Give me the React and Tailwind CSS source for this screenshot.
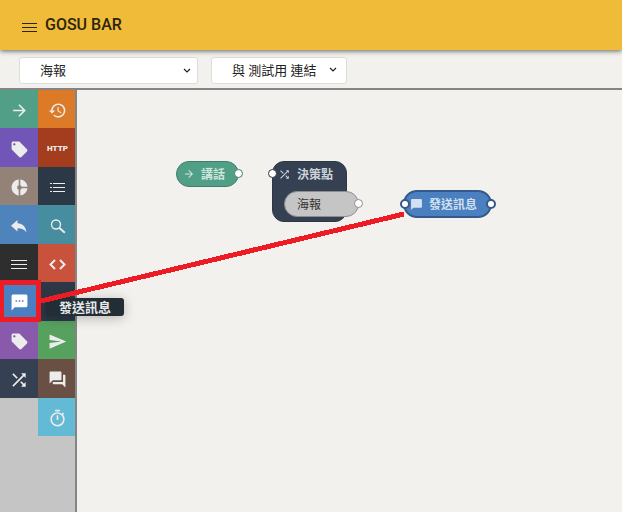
import {
  MdArrowForward, MdHistory, MdLocalOffer, MdDonutSmall,
  MdSms, MdSend, MdShuffle, MdForum, MdOutlineTimer, MdChatBubble,
} from "react-icons/md";

function ListIcon({ className }) {
  return (
    <svg viewBox="0 0 15 9" className={className} fill="currentColor" aria-hidden="true">
      <path d="M0 0h2v1H0zM0 4h2v1H0zM0 8h2v1H0zM3 0h12v1H3zM3 4h12v1H3zM3 8h12v1H3z" />
    </svg>
  );
}

function LinesIcon({ className }) {
  return (
    <svg viewBox="0 0 16 9" className={className} fill="currentColor" aria-hidden="true">
      <path d="M0 0h16v1H0zM0 4h16v1H0zM0 8h16v1H0z" />
    </svg>
  );
}

function ReplyIcon({ className }) {
  return (
    <svg viewBox="0 0 16 13" className={className} fill="currentColor" aria-hidden="true">
      <path d="M6.500 0v3.200C11.500 3.600 14.800 6.500 15.500 12.500C13.500 9.500 10.800 8.300 6.500 8.300v3.200L0 5.700z" />
    </svg>
  );
}

function SearchIcon({ className }) {
  return (
    <svg viewBox="0 0 16 15" className={className} fill="none" stroke="currentColor" aria-hidden="true">
      <circle cx="6" cy="5.500" r="4.500" strokeWidth="1.400" />
      <path d="M9.200 8.800L14.800 13.800" strokeWidth="1.900" />
    </svg>
  );
}

function CodeIcon({ className }) {
  return (
    <svg viewBox="0 0 17 11" className={className} fill="none" stroke="currentColor" strokeWidth="2" aria-hidden="true">
      <path d="M6 1L1.500 5.500L6 10M11 1l4.500 4.500L11 10" />
    </svg>
  );
}

function HttpLabel({ className }) {
  return <span className={className}>HTTP</span>;
}

function MenuGlyph({ className }) {
  return (
    <svg viewBox="0 0 15 9" className={className} fill="currentColor" aria-hidden="true">
      <path d="M0 0h15v1H0zM0 4h15v1H0zM0 8h15v1H0z" />
    </svg>
  );
}

function Chevron({ className }) {
  return (
    <svg viewBox="0 0 8 6" className={className} fill="none" stroke="currentColor" strokeWidth="1.2" aria-hidden="true">
      <path d="M1 1l3 3 3-3" />
    </svg>
  );
}

const tools = [
  { label: "講話", bg: "bg-[#529f87]", Icon: MdArrowForward, size: "size-[19px]" },
  { label: "歷史", bg: "bg-[#dc7a27]", Icon: MdHistory, size: "size-[19px]" },
  { label: "標籤", bg: "bg-[#7155b7]", Icon: MdLocalOffer, size: "size-[19px]" },
  { label: "HTTP", bg: "bg-[#a33d1d]", Icon: HttpLabel, size: "text-[8px] leading-4 font-black" },
  { label: "分流", bg: "bg-[#938278]", Icon: MdDonutSmall, size: "size-[19px]" },
  { label: "清單", bg: "bg-[#2d3846]", Icon: ListIcon, size: "h-[9px] w-[15px]" },
  { label: "回覆", bg: "bg-[#4f83bb]", Icon: ReplyIcon, size: "h-[13px] w-4" },
  { label: "搜尋", bg: "bg-[#458d9f]", Icon: SearchIcon, size: "h-[15px] w-4" },
  { label: "選單", bg: "bg-[#2e2e2e]", Icon: LinesIcon, size: "h-[9px] w-4" },
  { label: "程式碼", bg: "bg-[#c9523c]", Icon: CodeIcon, size: "h-[11px] w-[17px]" },
  { label: "發送訊息", bg: "bg-[#4a80c0]", Icon: MdSms, size: "size-[19px]", active: true },
  { label: "設定", bg: "bg-[#2d3846]", Icon: ListIcon, size: "h-[9px] w-[15px]" },
  { label: "加標籤", bg: "bg-[#8959ab]", Icon: MdLocalOffer, size: "size-[19px]" },
  { label: "傳送", bg: "bg-[#57a15f]", Icon: MdSend, size: "size-[19px]" },
  { label: "決策點", bg: "bg-[#354152]", Icon: MdShuffle, size: "size-[20px]" },
  { label: "對話", bg: "bg-[#6a5044]", Icon: MdForum, size: "size-[19px]" },
  { label: "計時", bg: "bg-[#62bad4]", Icon: MdOutlineTimer, size: "size-[19px]", second: true },
];

function Picker({ label, value, width, chevron }) {
  return (
    <div className={`relative ${width}`}>
      <select
        aria-label={label}
        className="block h-[27px] w-full appearance-none rounded-[3px] border border-[#deddda] bg-white pl-5 pr-6 pt-[2px] text-[13px] leading-5 text-[#222]"
      >
        <option>{value}</option>
      </select>
      <Chevron className={`pointer-events-none absolute h-[6px] w-2 text-[#222] ${chevron}`} />
    </div>
  );
}

function Port({ className }) {
  return <span className={`absolute rounded-full bg-white ${className}`} />;
}

export default function App() {
  return (
    <div className="relative flex min-h-screen flex-col overflow-hidden bg-[#f2f1ed] font-[Roboto,'Noto_Sans_CJK_TC',sans-serif]">
      <header className="relative z-10 flex h-[50px] items-center gap-2 bg-[#f0bb38] pl-[22px] text-[#2b2410] shadow-[0_1px_5px_rgba(0,0,0,0.6)]">
        <button aria-label="選單" className="pt-1">
          <MenuGlyph className="h-[9px] w-[15px]" />
        </button>
        <h1 className="text-[16px] font-medium leading-6">GOSU BAR</h1>
      </header>

      <div className="flex h-10 items-center gap-[13px] border-b-2 border-[#858585] pl-[19px] pt-[2px]">
        <Picker label="流程" value="海報" width="w-[179px]" chevron="right-[7px] top-[11px]" />
        <Picker label="連結" value="與 測試用 連結" width="w-[136px]" chevron="right-[10px] top-[10px]" />
      </div>

      <div className="flex flex-1">
        <nav className="w-[77px] shrink-0 border-r-2 border-[#858585] bg-[#c5c5c5]">
          <div className="grid h-[346px] grid-cols-[38px_1fr] grid-rows-9">
            {tools.map(({ label, bg, Icon, size, active, second }) => (
              <button
                key={label}
                aria-label={label}
                className={`flex items-center justify-center pt-[3px] even:pl-[2px] ${bg} ${second ? "col-start-2 pl-[2px]" : ""} ${active ? "text-white" : "text-[#ececec]"}`}
              >
                <Icon className={size} />
              </button>
            ))}
          </div>
        </nav>

        <main className="relative flex-1 text-[12px] font-bold">
          <div className="absolute left-[99px] top-[71px] flex h-[26px] w-[63px] items-center rounded-full border border-[#3f7d69] bg-[#529f87] pl-[6px] text-[#cfe6dd]">
            <MdArrowForward className="size-3" />
            <span className="ml-[6px] pt-[2px]">講話</span>
            <Port className="-right-[5px] top-[7px] size-[9px] border border-[#3f7d69]" />
          </div>

          <div className="absolute left-[195px] top-[71px] h-[61px] w-[75px] rounded-xl border border-[#2d3847] bg-[#354152] text-[#cdd3da]">
            <div className="flex h-6 items-center pl-[5px]">
              <MdShuffle className="size-[13px]" />
              <span className="ml-[6px] pt-[2px]">決策點</span>
            </div>
            <Port className="-left-[5px] top-[7px] size-[9px] border border-[#2d3847]" />
            <div className="absolute left-[11px] top-[29px] flex h-[26px] w-[75px] items-center rounded-full border border-[#8d8d8d] bg-[#c5c5c5] pl-3 font-normal text-[#333]">
              <span className="pt-[2px]">海報</span>
              <Port className="-right-[5px] top-[7px] size-[9px] border border-[#8d8d8d]" />
            </div>
          </div>

          <div className="absolute left-[326px] top-[100px] flex h-[28px] w-[89px] items-center rounded-full border-2 border-[#34598a] bg-[#4a80c0] pl-[5px] text-[#d3e0f0]">
            <MdChatBubble className="size-[13px]" />
            <span className="ml-[6px] pt-[2px]">發送訊息</span>
            <Port className="-left-[5px] top-[7px] size-[10px] border-2 border-[#34598a]" />
            <Port className="-right-[6px] top-[7px] size-[10px] border-2 border-[#34598a]" />
          </div>
        </main>
      </div>

      <div
        role="tooltip"
        className="absolute left-[46px] top-[298px] flex h-[18px] w-[78px] items-center justify-center rounded-[3px] bg-[#232d36] pt-px text-[13px] font-bold text-[#e6e8ea] shadow-[0_2px_12px_rgba(0,0,0,0.25)]"
      >
        發送訊息
      </div>

      <svg className="pointer-events-none absolute left-0 top-0 h-[512px] w-[622px]" viewBox="0 0 622 512" fill="none" stroke="#ed1c24" shapeRendering="crispEdges" aria-hidden="true">
        <rect x="1.500" y="282.500" width="37" height="37" strokeWidth="5" />
        <path d="M41 301L404 214" strokeWidth="5" />
      </svg>
    </div>
  );
}
